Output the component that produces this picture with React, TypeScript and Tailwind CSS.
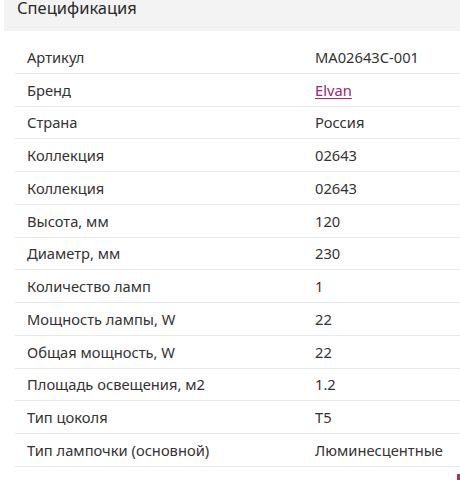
const specs: { label: string; value: string; link?: boolean }[] = [
  { label: 'Артикул', value: 'MA02643C-001' },
  { label: 'Бренд', value: 'Elvan', link: true },
  { label: 'Страна', value: 'Россия' },
  { label: 'Коллекция', value: '02643' },
  { label: 'Коллекция', value: '02643' },
  { label: 'Высота, мм', value: '120' },
  { label: 'Диаметр, мм', value: '230' },
  { label: 'Количество ламп', value: '1' },
  { label: 'Мощность лампы, W', value: '22' },
  { label: 'Общая мощность, W', value: '22' },
  { label: 'Площадь освещения, м2', value: '1.2' },
  { label: 'Тип цоколя', value: 'T5' },
  { label: 'Тип лампочки (основной)', value: 'Люминесцентные' },
]

export default function App() {
  return (
    <div
      className="w-[460px] h-[480px] overflow-hidden bg-white text-[#333333] relative"
      style={{ fontFamily: '"Noto Sans", "Open Sans", sans-serif' }}
    >
      {/* Header */}
      <div className="ml-1 h-[31px] bg-[#f3f3f3] pl-[13px] flex items-start">
        <h2 className="text-[16.5px] leading-[20px] -mt-[2px] text-[#2b2b2b]">Спецификация</h2>
      </div>

      {/* Table */}
      <div className="mt-[10px] ml-[15px]">
        {specs.map((row, i) => (
          <div
            key={i}
            className="flex items-center h-[32.75px] border-b border-[#e9e9e9] text-[14.7px] pl-3"
          >
            <span className="w-[288px] shrink-0">{row.label}</span>
            {row.link ? (
              <a href="#" className="text-[#a3256d] underline underline-offset-2">
                {row.value}
              </a>
            ) : (
              <span>{row.value}</span>
            )}
          </div>
        ))}
      </div>

      <div className="absolute right-0 bottom-0 w-[3px] h-[6px] bg-[#b03060]" />
    </div>
  )
}
